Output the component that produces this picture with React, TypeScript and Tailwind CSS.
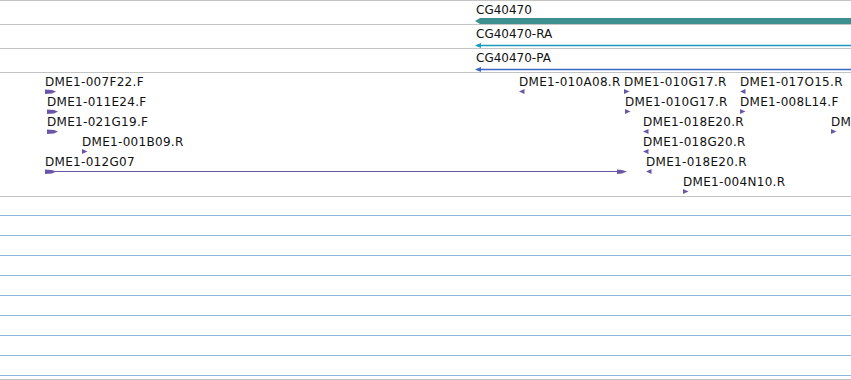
// Genome browser snippet: gene model tracks + BAC end feature track
import React from "react";

type Strand = "+" | "-";

interface Feature {
  name: string;
  x: number; // label / glyph start in px
  row: number;
  strand: Strand;
  big?: boolean;
  end?: number; // spanning feature end in px
}

const FEATURES: Feature[] = [
  { name: "DME1-007F22.F", x: 45, row: 0, strand: "+", big: true },
  { name: "DME1-010A08.R", x: 519, row: 0, strand: "-" },
  { name: "DME1-010G17.R", x: 624, row: 0, strand: "+" },
  { name: "DME1-017O15.R", x: 740, row: 0, strand: "-" },
  { name: "DME1-011E24.F", x: 47, row: 1, strand: "+", big: true },
  { name: "DME1-010G17.R", x: 625, row: 1, strand: "+" },
  { name: "DME1-008L14.F", x: 740, row: 1, strand: "+" },
  { name: "DME1-021G19.F", x: 47, row: 2, strand: "+", big: true },
  { name: "DME1-018E20.R", x: 643, row: 2, strand: "-" },
  { name: "DME1-018E20.R", x: 831, row: 2, strand: "+" },
  { name: "DME1-001B09.R", x: 82, row: 3, strand: "+" },
  { name: "DME1-018G20.R", x: 643, row: 3, strand: "-" },
  { name: "DME1-012G07", x: 45, row: 4, strand: "+", big: true, end: 627 },
  { name: "DME1-018E20.R", x: 646, row: 4, strand: "-" },
  { name: "DME1-004N10.R", x: 683, row: 5, strand: "+" },
];

const PURPLE = "#6a56a8";

function Glyph({ f }: { f: Feature }) {
  if (f.end) {
    const w = f.end - f.x;
    return (
      <svg width={w} height={6} className="block">
        <polygon points="0,0.5 7,1 11,2.5 7,4.5 0,5" fill={PURPLE} />
        <line x1={0} y1={2.5} x2={w - 4} y2={2.5} stroke={PURPLE} strokeWidth={1.1} />
        <polygon points={`${w - 10},0.5 ${w - 5},1 ${w},2.5 ${w - 5},4.5 ${w - 10},5`} fill={PURPLE} />
      </svg>
    );
  }
  if (f.big) {
    return (
      <svg width={12} height={6} className="block">
        <polygon points="0,0.5 7,1 11,2.5 7,4.5 0,5" fill={PURPLE} />
      </svg>
    );
  }
  return (
    <svg width={6} height={6} className="block">
      {f.strand === "+" ? (
        <polygon points="0,0 5.5,2.5 0,5" fill={PURPLE} />
      ) : (
        <polygon points="5.5,0 0,2.5 5.5,5" fill={PURPLE} />
      )}
    </svg>
  );
}

function GeneTrack({ label, kind, color }: { label: string; kind: "gene" | "mrna"; color: string }) {
  return (
    <div className="h-6 border-b border-[#c4c4c4] pl-[475px] pt-px flex flex-col">
      <span className="pl-px pt-px whitespace-nowrap">{label}</span>
      {kind === "gene" ? (
        <svg width={376} height={7} className="block mt-[1px]">
          <polygon points="0,3 5,0 376,0 376,6 5,6" fill={color} />
        </svg>
      ) : (
        <svg width={376} height={7} className="block mt-[1px]">
          <line x1={2} y1={3.5} x2={376} y2={3.5} stroke={color} strokeWidth={1.3} />
          <polygon points="0,3.5 6,1 6,6" fill={color} />
        </svg>
      )}
    </div>
  );
}

export default function App() {
  return (
    <div className="w-[851px] h-[380px] overflow-hidden bg-white border-t border-[#c4c4c4] text-[12px] leading-[14px] text-[#111] font-['DejaVu_Sans',sans-serif]">
      <GeneTrack label="CG40470" kind="gene" color="#408f90" />
      <GeneTrack label="CG40470-RA" kind="mrna" color="#1a9cbf" />
      <GeneTrack label="CG40470-PA" kind="mrna" color="#3a68c4" />

      <div className="relative h-[124px] border-b border-[#c4c4c4] overflow-hidden">
        {FEATURES.map((f, i) => (
          <div
            key={i}
            className="absolute flex flex-col"
            style={{ left: f.x, top: f.row * 20 }}
          >
            <span className="pt-[2px] whitespace-nowrap tracking-[0.3px]">{f.name}</span>
            <Glyph f={f} />
          </div>
        ))}
      </div>

      {/* empty tracks */}
      <div className="h-[183px] border-b border-[#c4c4c4] flex flex-col">
        <div className="h-[19px] shrink-0 border-b border-[#8ab8dc]" />
        {Array.from({ length: 8 }, (_, i) => (
          <div key={i} className="h-5 shrink-0 border-b border-[#8ab8dc]" />
        ))}
      </div>
    </div>
  );
}
